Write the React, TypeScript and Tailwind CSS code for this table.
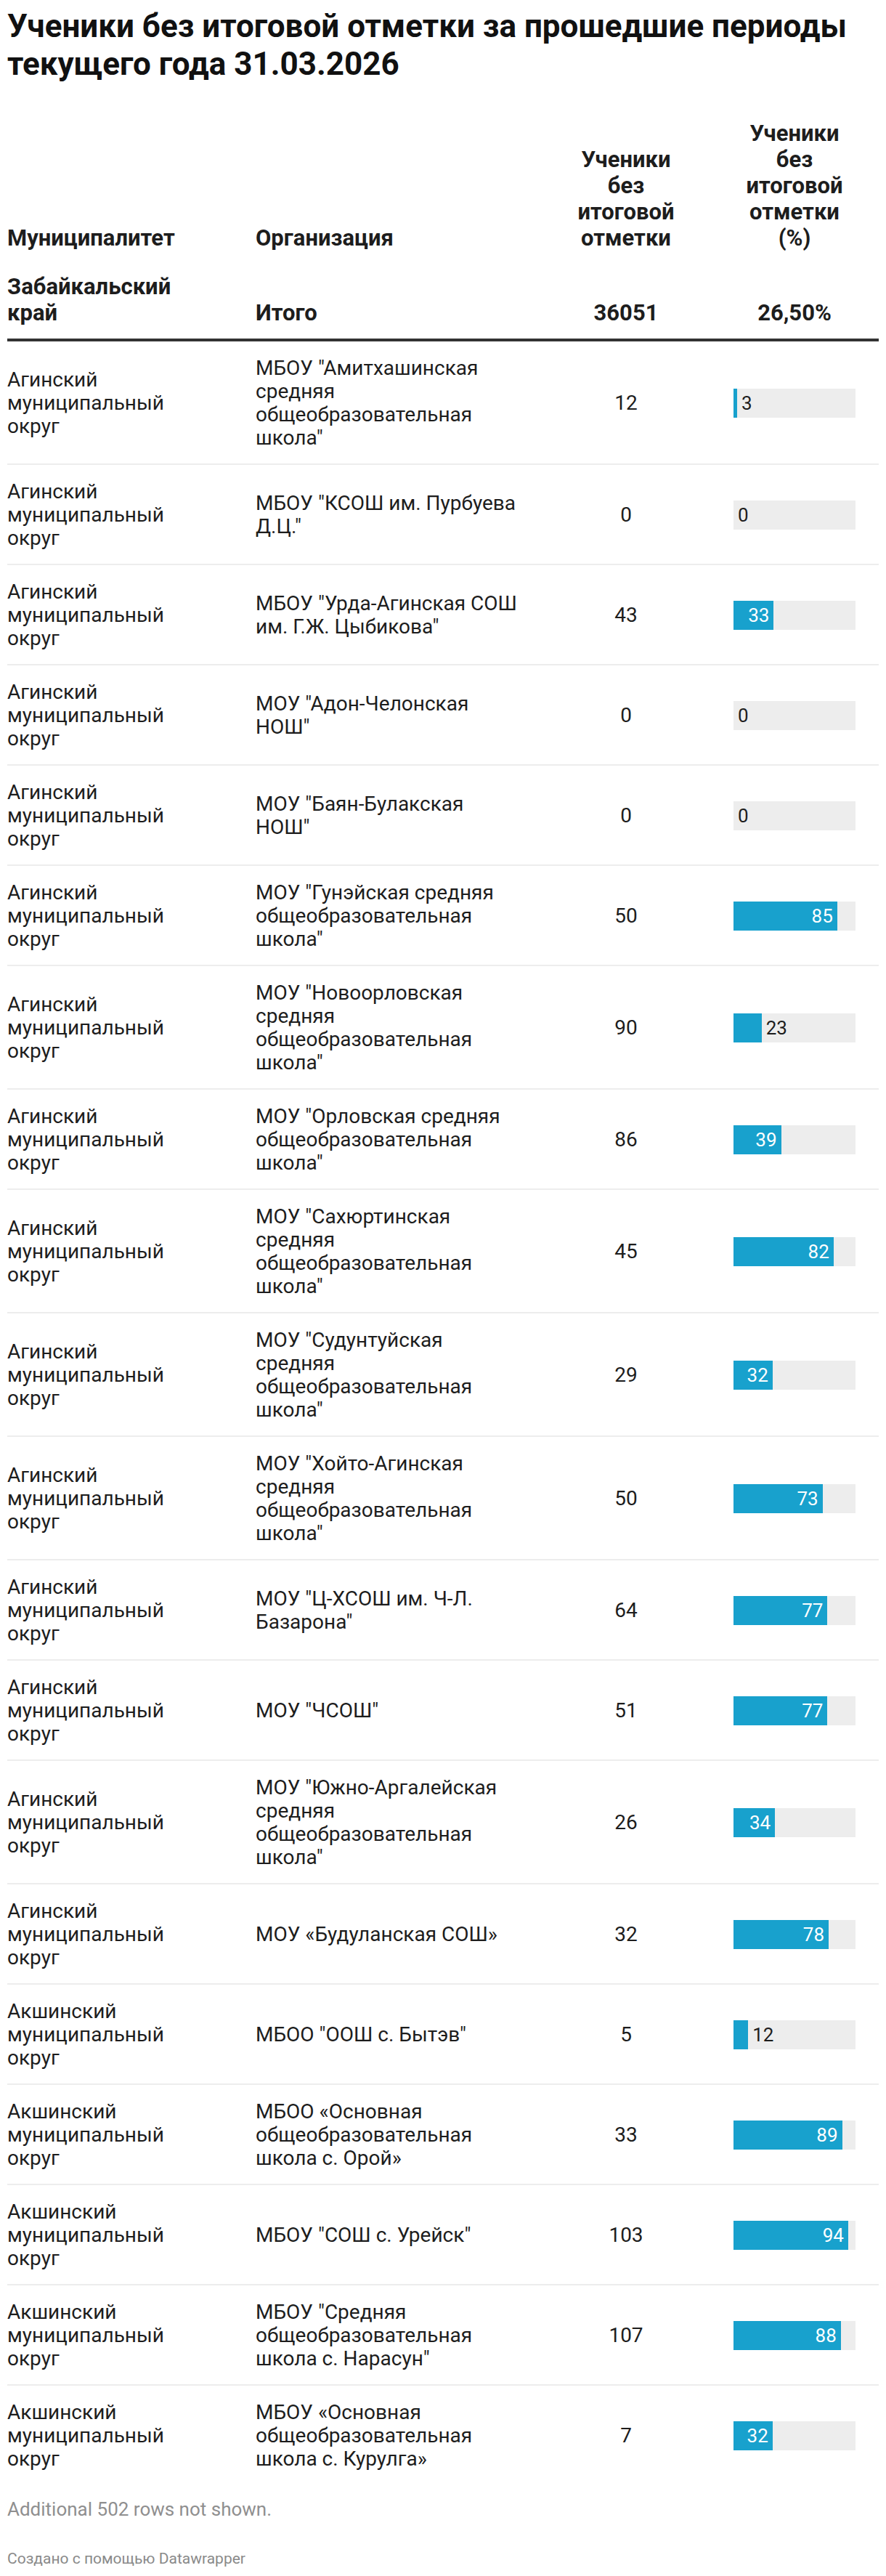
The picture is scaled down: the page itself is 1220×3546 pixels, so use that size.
import React from "react";

type Row = { m: string; o: string; n: number; p: number };

const AG = "Агинский муниципальный округ";
const AK = "Акшинский муниципальный округ";

const rows: Row[] = [
  { m: AG, o: 'МБОУ "Амитхашинская средняя общеобразовательная школа"', n: 12, p: 3 },
  { m: AG, o: 'МБОУ "КСОШ им. Пурбуева Д.Ц."', n: 0, p: 0 },
  { m: AG, o: 'МБОУ "Урда-Агинская СОШ им. Г.Ж. Цыбикова"', n: 43, p: 33 },
  { m: AG, o: 'МОУ "Адон-Челонская НОШ"', n: 0, p: 0 },
  { m: AG, o: 'МОУ "Баян-Булакская НОШ"', n: 0, p: 0 },
  { m: AG, o: 'МОУ "Гунэйская средняя общеобразовательная школа"', n: 50, p: 85 },
  { m: AG, o: 'МОУ "Новоорловская средняя общеобразовательная школа"', n: 90, p: 23 },
  { m: AG, o: 'МОУ "Орловская средняя общеобразовательная школа"', n: 86, p: 39 },
  { m: AG, o: 'МОУ "Сахюртинская средняя общеобразовательная школа"', n: 45, p: 82 },
  { m: AG, o: 'МОУ "Судунтуйская средняя общеобразовательная школа"', n: 29, p: 32 },
  { m: AG, o: 'МОУ "Хойто-Агинская средняя общеобразовательная школа"', n: 50, p: 73 },
  { m: AG, o: 'МОУ "Ц-ХСОШ им. Ч-Л. Базарона"', n: 64, p: 77 },
  { m: AG, o: 'МОУ "ЧСОШ"', n: 51, p: 77 },
  { m: AG, o: 'МОУ "Южно-Аргалейская средняя общеобразовательная школа"', n: 26, p: 34 },
  { m: AG, o: "МОУ «Будуланская СОШ»", n: 32, p: 78 },
  { m: AK, o: 'МБОО "ООШ с. Бытэв"', n: 5, p: 12 },
  { m: AK, o: "МБОО «Основная общеобразовательная школа с. Орой»", n: 33, p: 89 },
  { m: AK, o: 'МБОУ "СОШ с. Урейск"', n: 103, p: 94 },
  { m: AK, o: 'МБОУ "Средняя общеобразовательная школа с. Нарасун"', n: 107, p: 88 },
  { m: AK, o: "МБОУ «Основная общеобразовательная школа с. Курулга»", n: 7, p: 32 },
];

function Bar({ p }: { p: number }) {
  const inside = p >= 30;
  return (
    <div className="relative flex h-[40px] w-[168px] items-center bg-[#ededed]">
      <div
        className="flex h-full shrink-0 items-center justify-end bg-[#18a1cd]"
        style={{ width: `${(p / 100) * 168}px` }}
      >
        {inside && <span className="pr-[6px] text-[26px] leading-none text-white">{p}</span>}
      </div>
      {!inside && <span className="pl-[6px] text-[26px] leading-none text-[#1d1d1d]">{p}</span>}
    </div>
  );
}

export default function App() {
  return (
    <div className="min-h-[3546px] w-[1220px] bg-white px-[10px] font-['Roboto',sans-serif] text-[#1d1d1d]">
      <h1 className="pt-[10px] text-[44px] font-bold leading-[52px] text-[#111]">
        Ученики без итоговой отметки за прошедшие периоды текущего года 31.03.2026
      </h1>

      <div className="mt-[52px] grid grid-cols-[342px_370px_280px_208px] items-end text-[31px] font-bold leading-[36px]">
        <div>Муниципалитет</div>
        <div>Организация</div>
        <div className="flex justify-center">
          <div className="w-[168px] text-center">Ученики без итоговой отметки</div>
        </div>
        <div className="pl-[8px]">
          <div className="w-[168px] text-center">Ученики без итоговой отметки (%)</div>
        </div>
      </div>

      <div className="grid grid-cols-[342px_370px_280px_208px] items-end border-b-4 border-[#333] pb-[17px] pt-[31px] text-[31px] font-bold leading-[36px]">
        <div className="pr-[62px]">Забайкальский край</div>
        <div>Итого</div>
        <div className="text-center">36051</div>
        <div className="pl-[8px]">
          <div className="w-[168px] text-center">26,50%</div>
        </div>
      </div>

      <div className="text-[28px] leading-[32px]">
        {rows.map((r, i) => (
          <div
            key={i}
            className={
              i === rows.length - 1
                ? "grid grid-cols-[342px_370px_280px_208px] items-center pb-[19px] pt-[21px]"
                : "grid grid-cols-[342px_370px_280px_208px] items-center border-b-2 border-[#ededed] pb-[19px] pt-[21px]"
            }
          >
            <div className="pr-[62px]">{r.m}</div>
            <div className="pr-[10px]">{r.o}</div>
            <div className="text-center">{r.n}</div>
            <div className="pl-[8px]">
              <Bar p={r.p} />
            </div>
          </div>
        ))}
      </div>

      <div className="mt-[18px] text-[26px] leading-[32px] text-[#8f8f8f]">Additional 502 rows not shown.</div>
      <div className="mt-[40px] text-[21px] leading-[24px] text-[#8a8a8a]">Создано с помощью Datawrapper</div>
    </div>
  );
}
